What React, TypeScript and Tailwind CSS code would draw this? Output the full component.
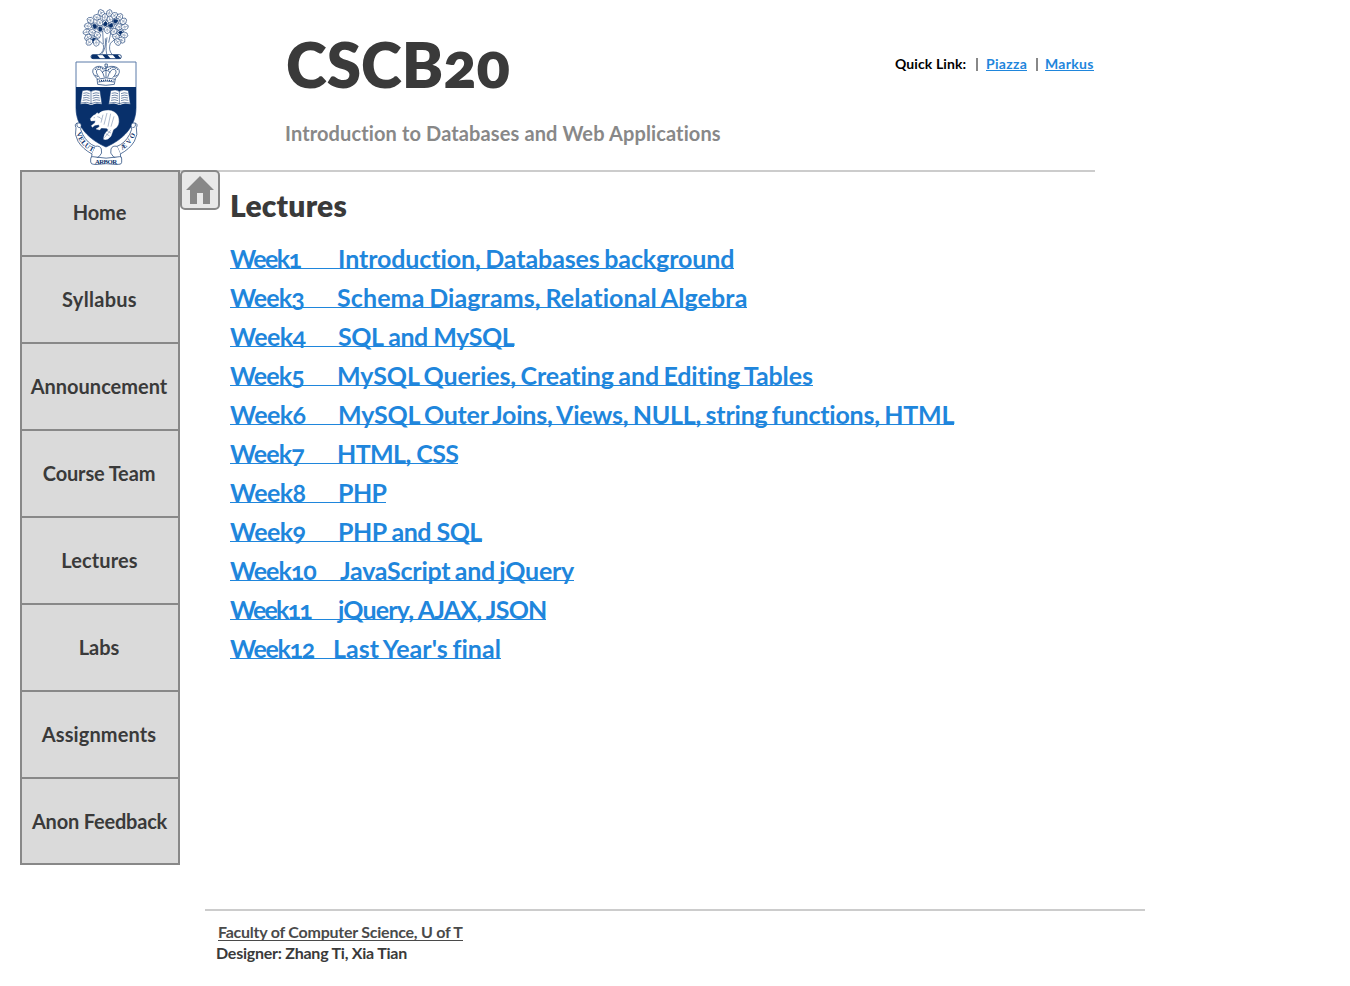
const navy = "#08306b";

const leaves: [number, number, number, boolean?][] = [
  [124, 37, 60], [148, 38, 110], [163, 45, 150], [111, 50, 20], [135, 50, 100], [179, 49, 130],
  [150, 57, 80], [92, 59, 30], [168, 62, 150, true], [190, 62, 140], [120, 66, 60], [137, 69, 90, true],
  [104, 76, 30, true], [84, 76, 10], [154, 74, 110, true], [177, 79, 150], [194, 79, 170], [121, 84, 50, true],
  [142, 88, 90], [80, 94, -10], [97, 95, 20], [162, 93, 130], [182, 96, 10, true], [193, 103, 10],
  [112, 103, 50], [84, 110, -30], [101, 117, -20, true], [168, 108, 20], [185, 118, 30], [88, 124, -40],
  [109, 126, 90], [173, 124, 60],
];

function Crest() {
  return (
    <svg className="block h-[165px] w-[90px]" viewBox="0 0 270 495" fill="none" stroke={navy} strokeWidth="2.4" strokeLinejoin="round">
      <path fill="#fff" strokeWidth="1.8" d="M117 164Q134 154 130 134L102 108M130 132L128 92M157 164Q144 150 151 130L178 106M146 128L154 90M140 162Q136 144 141 112M125 162Q139 145 136 115" />
      {leaves.map(([x, y, angle, solid]) => (
        <g key={`${x}-${y}`} transform={`translate(${x} ${y + 2}) rotate(${angle})`} strokeWidth="1.7">
          <path fill="#fff" d="M-11 1Q-11-5-6-6Q-3-11 2-8Q8-9 9-3Q13 1 9 4Q7 9 1 8Q-4 11-7 6Q-11 5-11 1Z" />
          {solid ? <path fill={navy} d="M-7 0Q0-9 6-2Q9 3 3 7Q-3 6-7 0Z" /> : <path strokeWidth="1" d="M-9 1L6 0M-2 0L1-5M-1 1L2 5" />}
        </g>
      ))}
      <rect x="93" y="164" width="91" height="12" rx="6" fill="#fff" />
      <path fill={navy} stroke="none" d="M97 164h14l10 12H98Q90 172 97 164zM127 164h15l10 12h-15zM158 164h15l10 12h-15z" />
      <path fill="#fff" d="M48 186H228V325C227 382 188 419 138 441C88 419 49 382 48 325Z" strokeWidth="3" stroke="#5b7ba8" />
      <path fill={navy} stroke="none" d="M48 261H228V325C227 382 188 419 138 441C88 419 49 382 48 325Z" />
      <g strokeWidth="2">
        <path fill="#fff" d="M111 236Q89 214 104 203Q119 193 135 207Q152 193 172 203Q187 214 166 236L163 253Q137 259 113 253ZM111 238Q138 229 166 238M115 246Q138 240 162 246" />
        <path d="M119 233Q103 216 113 208Q126 205 133 232M158 233Q175 216 164 208Q151 205 143 232M126 218Q138 204 151 218M135 192h7v9h-7zM138 200v33M104 225l10 5M173 225l-10 5" />
        <path strokeDasharray="3 3" strokeWidth="3.5" d="M105 209Q117 195 132 210M145 210Q159 195 173 209M117 243Q138 238 160 243" />
      </g>
      {[62, 147].map((x) => (
        <g key={x} transform={`translate(${x} 268)`}>
          <path fill="#fff" strokeWidth="1.5" d="M5 4Q21-1 31 6Q43-1 58 4L64 45Q45 41 35 47H28Q18 41-1 45Z" />
          <path strokeWidth="1.7" d="M31 6V44M8 12Q18 8 27 13M8 19Q18 15 27 20M7 26Q18 22 27 27M6 33Q18 29 27 34M36 13Q46 8 56 12M36 20Q46 15 56 19M36 27Q46 22 57 26M36 34Q46 29 58 33M1 41Q20 36 31 43Q43 36 62 41" />
        </g>
      ))}
      <path fill="#fff" stroke="#fff" strokeWidth="1" d="M91 356L99 347L107 343L111 338L116 341Q126 331 145 331Q166 332 174 349Q181 369 170 382L160 389L153 409Q143 422 131 418Q130 401 145 390L140 385L124 384L119 390L108 387L118 380L117 374L105 376L97 382L94 377L105 368L106 362L93 363Z" />
      <path strokeWidth="1" d="M101 353h4M112 350Q121 351 125 358M129 344L123 368M141 339L132 374M152 341L144 380M162 349L153 380M133 413L152 391M137 401L149 408M142 394L153 399" />
      <g fill="#fff" strokeWidth="2">
        <path d="M48 383Q42 372 52 369Q61 366 64 375Q58 387 68 403Q83 431 106 439L96 462Q68 447 54 424Q42 404 48 383Z" />
        <path d="M229 383Q235 372 225 369Q216 366 213 375Q219 387 209 403Q194 431 171 439L181 462Q209 447 223 424Q235 404 229 383Z" />
        <path d="M106 439Q120 436 124 447Q129 460 117 470Q103 480 95 470L96 462M171 439Q157 436 153 447Q148 460 160 470Q174 480 182 470L181 462M52 369Q47 382 60 383M225 369Q230 382 217 383" />
        <path d="M98 470Q138 479 179 470Q186 469 185 477V487Q184 494 176 493Q138 499 101 493Q93 493 92 486V477Q92 469 98 470Z" />
      </g>
      <g fill={navy} stroke="none" fontFamily="Liberation Serif, serif" fontWeight="700" textAnchor="middle">
        <text x="138" y="491" fontSize="20" textLength="66">ARBOR</text>
        <text transform="translate(58 404) rotate(66)" y="7" fontSize="21">V</text>
        <text transform="translate(64 417) rotate(58)" y="7" fontSize="21">E</text>
        <text transform="translate(72 428) rotate(50)" y="7" fontSize="21">L</text>
        <text transform="translate(82 438) rotate(38)" y="7" fontSize="21">U</text>
        <text transform="translate(95 446) rotate(28)" y="7" fontSize="21">T</text>
        <text transform="translate(190 439) rotate(-38)" y="7" fontSize="20">Æ</text>
        <text transform="translate(206 424) rotate(-50)" y="7" fontSize="20">V</text>
        <text transform="translate(217 407) rotate(-64)" y="7" fontSize="20">O</text>
      </g>
    </svg>
  );
}

const nav = [
  { label: "Home", style: "h-[85px] pb-1 pl-px tracking-[-0.1px]" },
  { label: "Syllabus", style: "h-[87px] pb-0.5 pl-px tracking-[0.3px]" },
  { label: "Announcement", style: "h-[87px] pb-0.5" },
  { label: "Course Team", style: "h-[87px] pb-0.5 tracking-[-0.15px]" },
  { label: "Lectures", style: "h-[87px] pb-0.5 pl-px tracking-[0.1px]" },
  { label: "Labs", style: "h-[87px] pb-0.5" },
  { label: "Assignments", style: "h-[87px] pb-0.5 tracking-[0.1px]" },
  { label: "Anon Feedback", style: "h-[86px] pl-px tracking-[-0.2px]" },
];

const lectures = [
  { week: "Week1", weekStyle: "w-[108px] tracking-[-1.6px]", title: "Introduction, Databases background", style: "tracking-[-0.1px] [word-spacing:-1.5px]" },
  { week: "Week3", weekStyle: "w-[107px] tracking-[-0.9px]", title: "Schema Diagrams, Relational Algebra", style: "tracking-[0.11px] [word-spacing:-1.5px]" },
  { week: "Week4", weekStyle: "w-[108px] tracking-[-0.6px]", title: "SQL and MySQL", style: "tracking-[-0.49px]" },
  { week: "Week5", weekStyle: "w-[107px] tracking-[-0.9px]", title: "MySQL Queries, Creating and Editing Tables", style: "tracking-[-0.11px] [word-spacing:-1.5px]" },
  { week: "Week6", weekStyle: "w-[108px] tracking-[-0.6px]", title: "MySQL Outer Joins, Views, NULL, string functions, HTML", style: "tracking-[-0.22px] [word-spacing:-1.5px]" },
  { week: "Week7", weekStyle: "w-[107px] tracking-[-0.9px]", title: "HTML, CSS", style: "tracking-[-0.6px]" },
  { week: "Week8", weekStyle: "w-[108px] tracking-[-0.6px]", title: "PHP", style: "tracking-[-0.6px]" },
  { week: "Week9", weekStyle: "w-[108px] tracking-[-0.6px]", title: "PHP and SQL", style: "tracking-[-0.52px]" },
  { week: "Week10", weekStyle: "w-[110px] tracking-[-1px]", title: "JavaScript and jQuery", style: "tracking-[-0.24px] [word-spacing:-1.5px]" },
  { week: "Week11", weekStyle: "w-[108px] tracking-[-1.8px]", title: "jQuery, AJAX, JSON", style: "tracking-[-0.83px]" },
  { week: "Week12", weekStyle: "w-[103px] tracking-[-1.3px]", title: "Last Year's final", style: "tracking-[0.05px] [word-spacing:-1.5px]" },
];

export default function App() {
  return (
    <div className="h-[986px] w-[1350px] overflow-hidden bg-white font-['Lato',sans-serif] font-bold whitespace-nowrap text-[#3a3a3a] oldstyle-nums">
      <header className="flex h-[170px]">
        <div className="w-[285px] pl-[60px]">
          <Crest />
        </div>
        <div className="w-[610px]">
          <h1 className="mt-[25px] pl-px text-[62px] leading-[78px] font-extrabold">CSCB20</h1>
          <p className="mt-[16px] text-[20px] leading-[28px] tracking-[0.12px] text-[#888]">Introduction to Databases and Web Applications</p>
        </div>
        <div className="flex pt-[54px] text-[14px] leading-[20px] text-black">
          <span className="w-[81px] tracking-[0.1px]">Quick Link:</span>
          <span className="mt-[4px] mr-[8px] h-[13px] w-[2px] bg-[#888]" />
          <a href="#" className="h-[17px] w-[41px] border-b border-[#1f86dc] tracking-[0.3px] text-[#1f86dc]">Piazza</a>
          <span className="mt-[4px] mr-[7px] ml-[9px] h-[13px] w-[2px] bg-[#888]" />
          <a href="#" className="h-[17px] w-[49px] border-b border-[#1f86dc] tracking-[0.3px] text-[#1f86dc]">Markus</a>
        </div>
      </header>

      <div className="flex h-[739px] pl-[20px]">
        <nav className="h-[695px] w-[160px] border-2 border-b-0 border-[#888] bg-[#dadada] text-[20px]">
          {nav.map(({ label, style }) => (
            <a key={label} href="#" className={`${style} flex items-center justify-center border-b-2 border-[#888] pr-0.5`}>
              {label}
            </a>
          ))}
        </nav>
        <main className="flex h-[2px] w-[915px] bg-[#ccc]">
          <a href="#" aria-label="Home" className="flex h-10 w-10 shrink-0 items-center justify-center rounded-[5px] border-2 border-[#888] bg-[#e8e8e8]">
            <svg className="h-7 w-7" viewBox="0 0 28 28" fill="#888">
              <path d="M14 0L28 14H24V28H17V17H11V28H4V14H0Z" />
            </svg>
          </a>
          <section className="ml-[10px]">
            <h2 className="mt-[16px] text-[30px] leading-[38px] font-extrabold tracking-[0.2px]">Lectures</h2>
            <ul className="mt-[14px] text-[25px] leading-[40px] text-[#1f86dc]">
              {lectures.map(({ week, weekStyle, title, style }) => (
                <li key={week} className="flex h-[39px]">
                  <a href="#" className="flex h-[31px] border-b border-[#1f86dc]">
                    <span className={weekStyle}>{week}</span>
                    <span className={style}>{title}</span>
                  </a>
                </li>
              ))}
            </ul>
          </section>
        </main>
      </div>

      <footer className="ml-[205px] w-[940px] border-t-2 border-[#ccc] pt-[10px] text-[16px] leading-[21px]">
        <div className="flex h-[21px] pl-[13px]">
          <a href="#" className="h-[20px] border-b border-[#4a4a4a] tracking-[-0.24px] text-[#4a4a4a]">Faculty of Computer Science, U of T</a>
        </div>
        <p className="pl-[11px] tracking-[-0.24px]">Designer: Zhang Ti, Xia Tian</p>
      </footer>
    </div>
  );
}
